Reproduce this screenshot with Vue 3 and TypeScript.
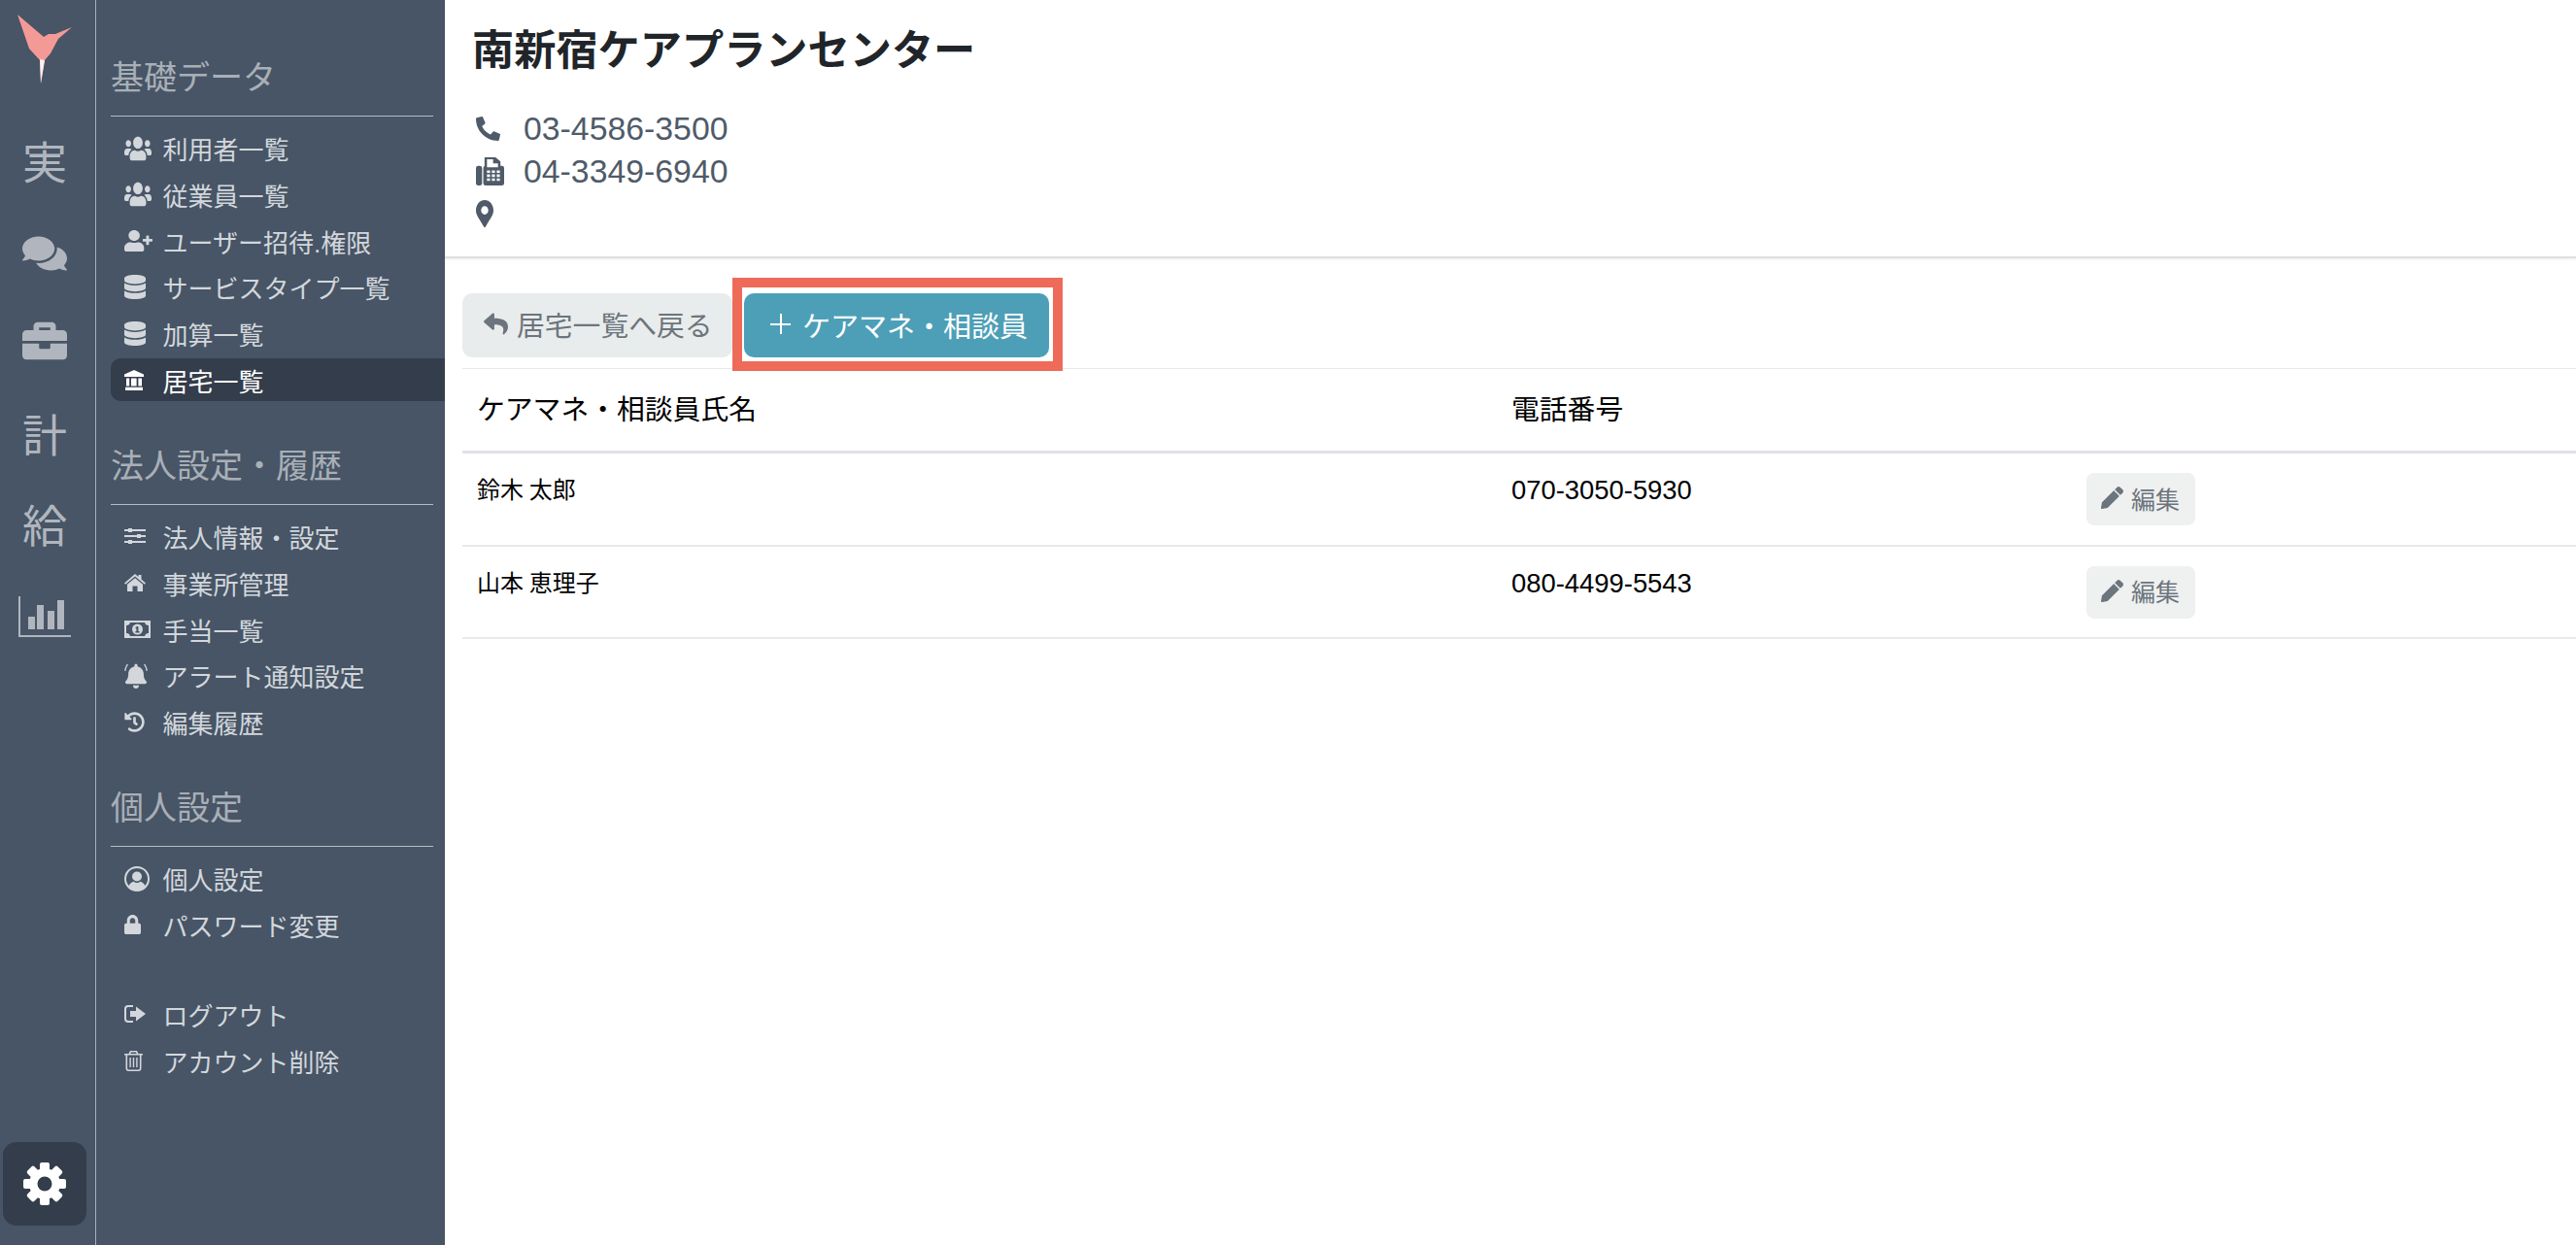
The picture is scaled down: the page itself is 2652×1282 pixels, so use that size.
<script setup lang="ts">
interface Ico { vb: string; d: string }
const P: Record<string, Ico> = {
  users: { vb: '0 0 640 512', d: 'M96 224c35.3 0 64-28.7 64-64s-28.7-64-64-64-64 28.7-64 64 28.7 64 64 64zm448 0c35.3 0 64-28.7 64-64s-28.7-64-64-64-64 28.7-64 64 28.7 64 64 64zm32 32h-64c-17.6 0-33.5 7.1-45.1 18.6 40.3 22.1 68.9 62 75.1 109.4h66c17.7 0 32-14.3 32-32v-32c0-35.3-28.7-64-64-64zm-256 0c61.9 0 112-50.1 112-112S381.9 32 320 32 208 82.1 208 144s50.1 112 112 112zm76.8 32h-8.3c-20.8 10-43.9 16-68.5 16s-47.6-6-68.5-16h-8.3C179.6 288 128 339.6 128 403.2V432c0 26.5 21.5 48 48 48h288c26.5 0 48-21.5 48-48v-28.8c0-63.6-51.6-115.2-115.2-115.2zm-223.7-13.4C161.5 263.1 145.6 256 128 256H64c-35.3 0-64 28.7-64 64v32c0 17.7 14.3 32 32 32h65.9c6.3-47.4 34.9-87.3 75.2-109.4z' },
  userPlus: { vb: '0 0 640 512', d: 'M624 208h-64v-64c0-8.8-7.2-16-16-16h-32c-8.8 0-16 7.2-16 16v64h-64c-8.8 0-16 7.2-16 16v32c0 8.8 7.2 16 16 16h64v64c0 8.8 7.2 16 16 16h32c8.8 0 16-7.2 16-16v-64h64c8.8 0 16-7.2 16-16v-32c0-8.8-7.2-16-16-16zm-400 48c70.7 0 128-57.3 128-128S294.7 0 224 0 96 57.3 96 128s57.3 128 128 128zm89.6 32h-16.7c-22.2 10.2-46.9 16-72.9 16s-50.6-5.8-72.9-16h-16.7C60.2 288 0 348.2 0 422.4V464c0 26.5 21.5 48 48 48h352c26.5 0 48-21.5 48-48v-41.6c0-74.2-60.2-134.4-134.4-134.4z' },
  db: { vb: '0 0 448 512', d: 'M448 73.143v45.714C448 159.143 347.667 192 224 192S0 159.143 0 118.857V73.143C0 32.857 100.333 0 224 0s224 32.857 224 73.143zM448 176v102.857C448 319.143 347.667 352 224 352S0 319.143 0 278.857V176c48.125 33.143 136.208 48.572 224 48.572S399.874 209.143 448 176zm0 160v102.857C448 479.143 347.667 512 224 512S0 479.143 0 438.857V336c48.125 33.143 136.208 48.572 224 48.572S399.874 369.143 448 336z' },
  bank: { vb: '0 0 20 21', d: 'M10 0L20 4.6V7H0V4.6ZM2 8.5H18V16.5H2ZM5.2 8.5V16.5H7V8.5ZM12.6 8.5V16.5H14.4V8.5ZM1 17.8H19V21H1Z' },
  sliders: { vb: '0 0 22 18', d: 'M0 2H4V1H8V2H22V4H8V5H4V4H0ZM0 8H13V7H17V8H22V10H17V11H13V10H0ZM0 14H4V13H8V14H22V16H8V17H4V16H0Z' },
  home: { vb: '0 0 22 18', d: 'M11 0L14.5 3V1H17.5V5.6L22 9.4L20.8 10.8L11 2.6L1.2 10.8L0 9.4ZM11 4.2L19 10.8V18H13.5V12.5H8.5V18H3V10.8Z' },
  money: { vb: '0 0 27 18', d: 'M0 0H27V18H0ZM2 5V13A4 4 0 0 1 6 16H21A4 4 0 0 1 25 13V5A4 4 0 0 1 21 2H6A4 4 0 0 1 2 5ZM13.5 3.5A5.5 5.5 0 1 1 13.5 14.5A5.5 5.5 0 1 1 13.5 3.5ZM13 6L11.3 7.2L12 8.2L12.4 7.9V11H11.4V12.4H15.6V11H14.4V6Z' },
  bell: { vb: '-20 -10 488 522', d: 'M224 512c35.32 0 63.97-28.65 63.97-64H160.03c0 35.35 28.65 64 63.97 64zm215.39-149.71c-19.32-20.76-55.47-51.99-55.47-154.29 0-77.7-54.48-139.9-127.94-155.16V32c0-17.67-14.32-32-31.98-32s-31.98 14.33-31.98 32v20.84C118.56 68.1 64.08 130.3 64.08 208c0 102.3-36.15 133.53-55.47 154.29-6 6.45-8.66 14.16-8.61 21.71.11 16.4 12.98 32 32.1 32h383.8c19.12 0 32-15.6 32.1-32 .05-7.55-2.61-15.27-8.61-21.71zM60 20C30 55 15 100 10 150L-18 142C-10 85 12 35 42 0ZM388 20C418 55 433 100 438 150L466 142C458 85 436 35 406 0Z' },
  history: { vb: '0 0 512 512', d: 'M504 255.531c.253 136.64-111.18 248.372-247.82 248.468-59.015.042-113.223-20.53-155.822-54.911-11.077-8.94-11.905-25.541-1.839-35.607l11.267-11.267c8.609-8.609 22.353-9.551 31.891-1.984C173.062 425.135 212.781 440 256 440c101.705 0 184-82.311 184-184 0-101.705-82.311-184-184-184-48.814 0-93.149 18.969-126.068 49.932l50.754 50.754c10.08 10.08 2.941 27.314-11.313 27.314H24c-8.837 0-16-7.163-16-16V38.627c0-14.254 17.234-21.393 27.314-11.314l49.372 49.372C129.209 34.136 189.552 8 256 8c136.81 0 247.747 110.78 248 247.531zm-180.912 78.784l9.823-12.63c8.138-10.463 6.253-25.542-4.21-33.679L288 256.349V152c0-13.255-10.745-24-24-24h-16c-13.255 0-24 10.745-24 24v135.651l65.409 50.874c10.463 8.137 25.541 6.253 33.679-4.21z' },
  userCircle: { vb: '0 0 26 26', d: 'M13 0A13 13 0 1 1 13 26A13 13 0 1 1 13 0ZM13 2A11 11 0 0 0 4.6 20.1C6 17.4 8 16 9.6 15.7C10.6 16.5 11.7 17 13 17C14.3 17 15.4 16.5 16.4 15.7C18 16 20 17.4 21.4 20.1A11 11 0 0 0 13 2ZM13 5.5A5 5 0 1 1 13 15.5A5 5 0 1 1 13 5.5Z' },
  lock: { vb: '0 0 448 512', d: 'M400 224h-24v-72C376 68.2 307.8 0 224 0S72 68.2 72 152v72H48c-26.5 0-48 21.5-48 48v192c0 26.5 21.5 48 48 48h352c26.5 0 48-21.5 48-48V272c0-26.5-21.5-48-48-48zm-104 0H152v-72c0-39.7 32.3-72 72-72s72 32.3 72 72v72z' },
  signOut: { vb: '0 0 22 18', d: 'M4 0H9V2H4A2 2 0 0 0 2 4V14A2 2 0 0 0 4 16H9V18H4A4 4 0 0 1 0 14V4A4 4 0 0 1 4 0ZM12 1.5L22 9L12 16.5V12H6V6H12Z' },
  trash: { vb: '0 0 19 21', d: 'M6 0H13L14.5 3H19V4.6H17.5V18A3 3 0 0 1 14.5 21H4.5A3 3 0 0 1 1.5 18V4.6H0V3H4.5ZM6.4 3H12.6L12 1.6H7ZM3.1 4.6V18A1.4 1.4 0 0 0 4.5 19.4H14.5A1.4 1.4 0 0 0 15.9 18V4.6ZM5.4 7H6.8V17H5.4ZM8.8 7H10.2V17H8.8ZM12.2 7H13.6V17H12.2Z' },
  comments: { vb: '0 0 576 512', d: 'M416 192c0-88.4-93.1-160-208-160S0 103.6 0 192c0 34.3 14.1 65.9 38 92-13.4 30.2-35.5 54.2-35.8 54.5-2.2 2.3-2.8 5.7-1.5 8.7S4.8 352 8 352c36.6 0 66.9-12.3 88.7-25 32.2 15.7 70.3 25 111.3 25 114.9 0 208-71.6 208-160zm122 220c23.9-26 38-57.7 38-92 0-66.9-53.5-124.2-129.3-148.1.9 6.6 1.3 13.3 1.3 20.1 0 105.9-107.7 192-240 192-10.8 0-21.3-.8-31.7-1.9C207.8 439.6 281.8 480 368 480c41 0 79.1-9.2 111.3-25 21.8 12.7 52.1 25 88.7 25 3.2 0 6.1-1.9 7.3-4.8 1.3-2.9.7-6.3-1.5-8.7-.3-.3-22.4-24.2-35.8-54.5z' },
  briefcase: { vb: '0 0 512 512', d: 'M320 336c0 8.84-7.16 16-16 16h-96c-8.84 0-16-7.16-16-16v-48H0v144c0 25.6 22.4 48 48 48h416c25.6 0 48-22.4 48-48V288H320v48zm144-208h-80V80c0-25.6-22.4-48-48-48H176c-25.6 0-48 22.4-48 48v48H48c-25.6 0-48 22.4-48 48v80h512v-80c0-25.6-22.4-48-48-48zm-144 0H192V96h128v32z' },
  chart: { vb: '0 0 54 42', d: 'M0 0H2V40H54V42H0ZM10 21H17V34H10ZM19 9H26V34H19ZM30 15H37V34H30ZM40 4H47V34H40Z' },
  phone: { vb: '0 0 512 512', d: 'M14.6 24.6l104-24a24.16 24.16 0 0 1 27.5 13.9l48 112a23.94 23.94 0 0 1-6.9 28l-60.6 49.6A370.66 370.66 0 0 0 307.8 381.3l49.6-60.6a24 24 0 0 1 28-6.9l112 48a24.29 24.29 0 0 1 14 27.6l-24 104A24 24 0 0 1 464 512C207.9 512 0 304.5 0 48a24 24 0 0 1 14.6-23.4z' },
  fax: { vb: '0 0 23 28', d: 'M0 10.5A2 2 0 0 1 2 8.5H3A2 2 0 0 1 5 10.5V26A2 2 0 0 1 3 28H2A2 2 0 0 1 0 26ZM7 0H16L20 4V8.5H21A2 2 0 0 1 23 10.5V26A2 2 0 0 1 21 28H8A2 2 0 0 1 6 26V10.5A2 2 0 0 1 7 8.7ZM9 2V10H18V6H14V2ZM9 13V15.5H11.5V13ZM13 13V15.5H15.5V13ZM17 13V15.5H19.5V13ZM9 17V19.5H11.5V17ZM13 17V19.5H15.5V17ZM17 17V19.5H19.5V17ZM9 21V23.5H11.5V21ZM13 21V23.5H15.5V21ZM17 21V23.5H19.5V21Z' },
  marker: { vb: '0 0 384 512', d: 'M172.268 501.67C26.97 291.031 0 269.413 0 192 0 85.961 85.961 0 192 0s192 85.961 192 192c0 77.413-26.97 99.031-172.268 309.67-9.535 13.774-29.93 13.773-39.464 0zM192 272c44.183 0 80-35.817 80-80s-35.817-80-80-80-80 35.817-80 80 35.817 80 80 80z' },
  reply: { vb: '0 0 512 512', d: 'M8.309 189.836L184.313 37.851C199.719 24.546 224 35.347 224 56.015v80.053c160.629 1.839 288 34.032 288 186.258 0 61.441-39.581 122.309-83.333 154.132-13.653 9.931-33.111-2.533-28.077-18.631 45.344-145.012-21.507-183.51-176.59-185.742V360c0 20.7-24.3 31.453-39.687 18.164l-176.004-152c-11.071-9.562-11.086-26.753 0-36.328z' },
  pencil: { vb: '0 0 512 512', d: 'M497.9 142.1l-46.1 46.1c-4.7 4.7-12.3 4.7-17 0l-111-111c-4.7-4.7-4.7-12.3 0-17l46.1-46.1c18.7-18.7 49.1-18.7 67.9 0l60.1 60.1c18.8 18.7 18.8 49.1 0 67.9zM284.2 99.8L21.6 362.4.4 483.9c-2.9 16.4 11.4 30.6 27.8 27.8l121.5-21.3 262.6-262.6c4.7-4.7 4.7-12.3 0-17l-111-111c-4.8-4.7-12.4-4.7-17.1 0z' },
};

interface Item { icon: string; w: number; h: number; label: string; active?: boolean; gap?: boolean }
const sections: { title: string; items: Item[] }[] = [
  { title: '基礎データ', items: [
    { icon: 'users', w: 28, h: 28, label: '利用者一覧' },
    { icon: 'users', w: 28, h: 28, label: '従業員一覧' },
    { icon: 'userPlus', w: 29, h: 22, label: 'ユーザー招待.権限' },
    { icon: 'db', w: 22, h: 25, label: 'サービスタイプ一覧' },
    { icon: 'db', w: 22, h: 25, label: '加算一覧' },
    { icon: 'bank', w: 20, h: 21, label: '居宅一覧', active: true },
  ] },
  { title: '法人設定・履歴', items: [
    { icon: 'sliders', w: 22, h: 18, label: '法人情報・設定' },
    { icon: 'home', w: 22, h: 18, label: '事業所管理' },
    { icon: 'money', w: 27, h: 18, label: '手当一覧' },
    { icon: 'bell', w: 24, h: 26, label: 'アラート通知設定' },
    { icon: 'history', w: 21, h: 21, label: '編集履歴' },
  ] },
  { title: '個人設定', items: [
    { icon: 'userCircle', w: 26, h: 26, label: '個人設定' },
    { icon: 'lock', w: 17, h: 20, label: 'パスワード変更' },
    { icon: 'signOut', w: 22, h: 18, label: 'ログアウト', gap: true },
    { icon: 'trash', w: 19, h: 21, label: 'アカウント削除' },
  ] },
];
const rail = [
  { text: '実' },
  { icon: 'comments', w: 46, h: 40, cls: 'down-8' },
  { icon: 'briefcase', w: 46, h: 44 },
  { text: '計' },
  { text: '給' },
  { icon: 'chart', w: 54, h: 42, cls: 'down-6' },
];
const teeth = [0, 45, 90, 135];
const staff = [
  { name: '鈴木 太郎', tel: '070-3050-5930' },
  { name: '山本 恵理子', tel: '080-4499-5543' },
];
</script>

<template>
  <div class="page">
    <nav class="rail">
      <div class="logo">
        <svg width="58" height="74" viewBox="18 14 58 74">
          <path fill="#f49a96" d="M18 15L45 38L50 35L57 35L74 28L60 40L52 55L46 62L42 86L41 62L30 50Z" />
          <path fill="#fff" d="M41 61L46 62L42 86Z" opacity=".85" />
        </svg>
      </div>
      <div v-for="(r, i) in rail" :key="i" class="rail-item">
        <span v-if="r.text">{{ r.text }}</span>
        <svg v-else :class="r.cls" :width="r.w" :height="r.h" :viewBox="P[r.icon!].vb" preserveAspectRatio="none"><path :d="P[r.icon!].d" /></svg>
      </div>
      <div class="gear">
        <svg width="44" height="44" viewBox="0 0 44 44">
          <circle cx="22" cy="22" r="16" />
          <rect v-for="a in teeth" :key="a" x="17" y="0" width="10" height="44" rx="2" :transform="`rotate(${a} 22 22)`" />
          <circle cx="22" cy="22" r="7.5" class="gear-hole" />
        </svg>
      </div>
    </nav>

    <aside class="side">
      <section v-for="s in sections" :key="s.title" class="sec">
        <h3 class="sec-title">{{ s.title }}</h3>
        <a v-for="it in s.items" :key="it.label" class="row" :class="{ active: it.active, gap: it.gap }">
          <span class="ico"><svg :width="it.w" :height="it.h" :viewBox="P[it.icon].vb" preserveAspectRatio="none"><path fill-rule="evenodd" :d="P[it.icon].d" /></svg></span>
          <span>{{ it.label }}</span>
        </a>
      </section>
    </aside>

    <main class="main">
      <header class="head">
        <h1 class="title">南新宿ケアプランセンター</h1>
        <div class="contact">
          <span class="c-ico"><svg width="25" height="25" :viewBox="P.phone.vb" preserveAspectRatio="none"><path :d="P.phone.d" /></svg></span>
          <span>03-4586-3500</span>
        </div>
        <div class="contact">
          <span class="c-ico"><svg width="29" height="29" :viewBox="P.fax.vb" preserveAspectRatio="none"><path fill-rule="evenodd" :d="P.fax.d" /></svg></span>
          <span>04-3349-6940</span>
        </div>
        <div class="contact">
          <span class="c-ico"><svg width="18" height="28" :viewBox="P.marker.vb" preserveAspectRatio="none"><path :d="P.marker.d" /></svg></span>
        </div>
      </header>

      <div class="content">
        <div class="toolbar">
          <button class="btn back">
            <svg width="25" height="25" :viewBox="P.reply.vb"><path :d="P.reply.d" /></svg>
            居宅一覧へ戻る
          </button>
          <button class="btn add">
            <span class="plus"></span>
            ケアマネ・相談員
            <span class="frame"></span>
          </button>
        </div>
        <div class="t-head t-grid">
          <div>ケアマネ・相談員氏名</div>
          <div>電話番号</div>
          <div></div>
        </div>
        <div v-for="p in staff" :key="p.tel" class="t-row t-grid">
          <div class="name">{{ p.name }}</div>
          <div class="tel">{{ p.tel }}</div>
          <div>
            <button class="edit">
              <svg width="23" height="23" :viewBox="P.pencil.vb"><path :d="P.pencil.d" /></svg>
              編集
            </button>
          </div>
        </div>
      </div>
    </main>
  </div>
</template>

<style>
html, body { margin: 0; padding: 0; background: #fff; }
</style>

<style scoped>
.page {
  display: flex;
  height: 1282px;
  width: 2652px;
  overflow: hidden;
  font-family: "Liberation Sans", "Noto Sans CJK JP", sans-serif;
}
.rail {
  width: 98px;
  flex: none;
  background: #475566;
  border-right: 1px solid #a9b0b9;
  display: flex;
  flex-direction: column;
  color: #b1b6be;
  fill: #b1b6be;
}
.logo {
  height: 117px;
  width: 100%;
  display: flex;
  padding-top: 14px;
  padding-left: 18px;
  box-sizing: border-box;
  flex: none;
}
.rail-item {
  height: 93.6px;
  width: 92px;
  display: flex;
  align-items: center;
  justify-content: center;
  font-size: 46px;
}
.down-8 { margin-top: 8px; }
.down-6 { margin-top: 6px; }
.gear {
  margin: auto 0 20px 3px;
  width: 86px;
  height: 86px;
  border-radius: 14px;
  background: #343d4b;
  display: flex;
  align-items: center;
  justify-content: center;
  fill: #fff;
}
.gear-hole { fill: #343d4b; }
.side {
  width: 359px;
  flex: none;
  background: #475566;
  padding: 57px 0 0 15px;
  box-sizing: border-box;
}
.sec { margin-bottom: 43.5px; }
.sec-title {
  margin: 0 12px 10.5px 0;
  height: 62px;
  line-height: 47px;
  font-size: 34px;
  font-weight: 400;
  color: #a9afb7;
  border-bottom: 1px solid #b7bcc3;
}
.row {
  display: flex;
  align-items: center;
  height: 44px;
  margin-bottom: 3.8px;
  font-size: 26px;
  color: #d3d7dc;
  fill: #d3d7dc;
  border-radius: 10px 0 0 10px;
}
.row.active { background: #343d4b; color: #fff; fill: #fff; margin-top: 1.5px; }
.row.gap { margin-top: 48px; }
.ico { width: 53.5px; padding-left: 14px; box-sizing: border-box; display: flex; align-items: center; flex: none; }
.main { flex: 1; min-width: 0; background: #fff; }
.head {
  height: 266px;
  box-sizing: border-box;
  padding: 22px 0 0 28px;
  border-bottom: 2px solid #dddfe0;
  box-shadow: 0 1px 2px rgba(0,0,0,.08);
}
.title {
  margin: 0 0 29px;
  font-size: 43.2px;
  line-height: 60px;
  font-weight: 700;
  color: #212529;
}
.contact {
  display: flex;
  align-items: center;
  height: 43.6px;
  font-size: 33.8px;
  color: #4f5b69;
  fill: #4f5b69;
}
.c-ico { width: 53px; flex: none; padding-left: 4px; box-sizing: border-box; display: flex; align-items: center; }
.content { padding: 36px 0 0 18px; }
.toolbar { display: flex; gap: 12px; height: 66px; margin-bottom: 11px; }
.btn {
  height: 66px;
  border: 0;
  border-radius: 10px;
  font: inherit;
  font-size: 28.8px;
  display: flex;
  align-items: center;
  white-space: nowrap;
  padding: 0 0 3px;
}
.back { width: 278px; background: #e9ecec; color: #6c757d; fill: #6c757d; padding-left: 22px; gap: 9px; }
.add { position: relative; width: 314px; background: #4d9fb7; color: #fff; padding-left: 27px; gap: 12px; font-size: 29px; }
.plus { position: relative; width: 21px; height: 21px; flex: none; }
.plus::before, .plus::after { content: ""; position: absolute; background: #fff; }
.plus::before { left: 0; right: 0; top: 9.5px; height: 2px; }
.plus::after { top: 0; bottom: 0; left: 9.5px; width: 2px; }
.frame {
  position: absolute;
  left: -12px;
  right: -14px;
  top: -16px;
  bottom: -14px;
  border: 10px solid #ee6b5a;
  pointer-events: none;
}
.t-grid { display: grid; grid-template-columns: 1064px 592px 1fr; }
.t-grid > div { padding-left: 16px; }
.t-grid > div:first-child { padding-left: 15px; }
.t-head {
  border-top: 1px solid #e7e9ea;
  height: 88px;
  box-sizing: border-box;
  border-bottom: 3px solid #dee2e6;
  font-size: 28.8px;
  line-height: 84px;
  color: #000;
}
.t-row {
  height: 95.5px;
  box-sizing: border-box;
  padding-top: 20px;
  border-bottom: 2px solid #e7e9ea;
  color: #000;
}
.name { font-size: 24px; line-height: 36px; word-spacing: -1px; }
.tel { font-size: 27.4px; line-height: 36px; }
.edit {
  width: 112px;
  height: 54px;
  border: 0;
  border-radius: 8px;
  background: #eff0f0;
  color: #6c757d;
  fill: #6c757d;
  font: inherit;
  font-size: 25px;
  display: flex;
  align-items: center;
  gap: 8px;
  padding: 0 0 3px 15px;
}
</style>
